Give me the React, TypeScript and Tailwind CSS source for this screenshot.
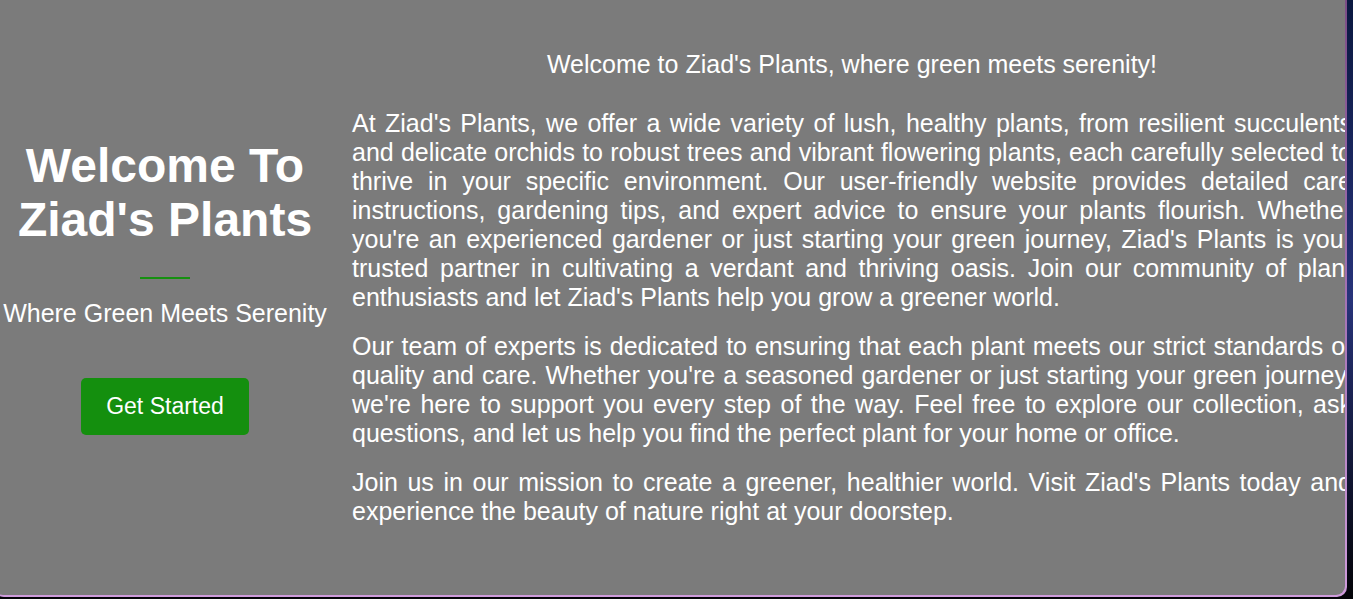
export default function App() {
  return (
    <div className="w-screen h-[599px] overflow-hidden bg-linear-to-b from-[#0a1840] via-[#27337a] to-[#040408] font-['Liberation_Sans',Arial,sans-serif] text-white">
      <div className="ml-[-6px] mt-[-12px] w-[1353px] h-[609px] rounded-[10px] bg-linear-to-b from-[#7a4c84] via-[#a372b2] to-[#cf9cdc] pr-[2px] pb-[2px]">
        <div className="w-full h-full rounded-[9px] bg-[#7b7b7b] overflow-hidden flex items-center pl-[6px] pb-[11px]">
          <div className="w-[330px] shrink-0 flex flex-col items-center text-center mt-[2px]">
            <h1 className="text-[48px] leading-[54px] font-bold">
              Welcome To
              <br />
              Ziad's Plants
            </h1>
            <div className="w-[50px] h-[2px] bg-[#159010] mt-[30px]" />
            <p className="text-[25px] leading-[29px] mt-[20px] whitespace-nowrap">
              Where Green Meets Serenity
            </p>
            <button className="mt-[50px] w-[168px] h-[57px] rounded-[5px] bg-[#148f0e] text-[23px] flex items-center justify-center">
              Get Started
            </button>
          </div>

          <div className="w-[1000px] shrink-0 ml-[22px] mt-[4px] text-[25px] leading-[29px]">
            <p className="text-center mb-[30px]">
              Welcome to Ziad's Plants, where green meets serenity!
            </p>
            <p className="text-justify mb-[20px]">
              At Ziad's Plants, we offer a wide variety of lush, healthy plants, from resilient succulents and
              delicate orchids to robust trees and vibrant flowering plants, each carefully selected to thrive in
              your specific environment. Our user-friendly website provides detailed care instructions, gardening
              tips, and expert advice to ensure your plants flourish. Whether you're an experienced gardener or just
              starting your green journey, Ziad's Plants is your trusted partner in cultivating a verdant and
              thriving oasis. Join our community of plant enthusiasts and let Ziad's Plants help you grow a greener
              world.
            </p>
            <p className="text-justify mb-[20px]">
              Our team of experts is dedicated to ensuring that each plant meets our strict standards of quality and
              care. Whether you're a seasoned gardener or just starting your green journey, we're here to support you
              every step of the way. Feel free to explore our collection, ask questions, and let us help you find the
              perfect plant for your home or office.
            </p>
            <p className="text-justify">
              Join us in our mission to create a greener, healthier world. Visit Ziad's Plants today and experience
              the beauty of nature right at your doorstep.
            </p>
          </div>
        </div>
      </div>
    </div>
  );
}
